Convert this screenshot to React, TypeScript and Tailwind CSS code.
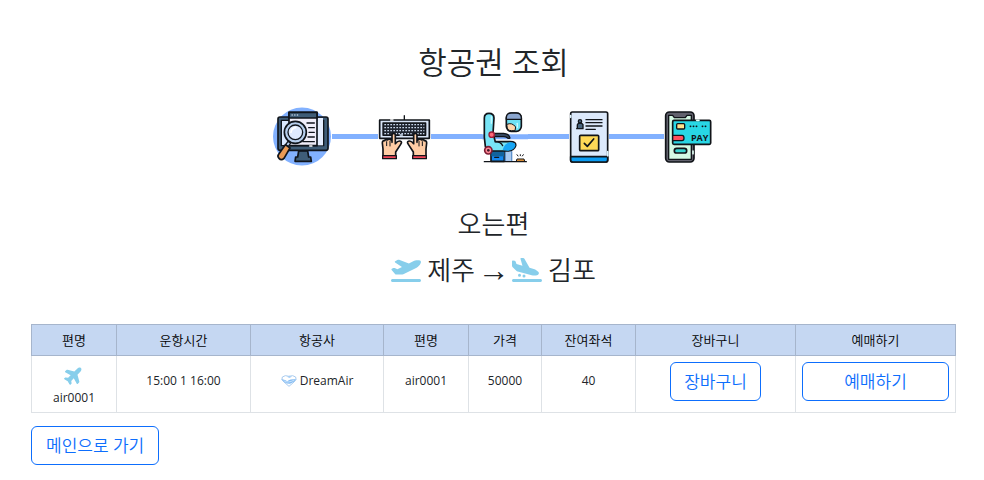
import { FaPlane, FaPlaneArrival, FaPlaneDeparture } from "react-icons/fa6";

function SearchIcon() {
  return (
    <svg className="h-[59px] w-[59px]" viewBox="27 21 177 177" fill="none" stroke="#10151c" strokeWidth="5" strokeLinejoin="round" strokeLinecap="round" aria-hidden="true">
      <circle cx="114" cy="109.500" r="87" fill="#82b1ff" stroke="none" />
      <path d="M104 153h27l3 18h6l2 13H93l2-13h6z" fill="#3f5d78" />
      <rect x="42" y="51" width="150" height="100" rx="6" fill="#3f5d78" />
      <path d="M52 61h127v76H52z" fill="#d9e8ff" strokeWidth="4" />
      <path d="M160 54h17v82h-17z" fill="#e5eeff" stroke="none" />
      <path d="M75 37h84v100H75z" fill="#f0eefa" />
      <path d="M75 37h84v17H75z" fill="#3f5d78" />
      <path d="M84 45h1M92 45h1M100 45h1" stroke="#b8c7dc" strokeWidth="4" />
      <path d="M129 69h22M134 83h17M135 97h16M132 111h19M117 125h34" strokeWidth="4" />
      <path d="m137 138 7 0" stroke="#fff" strokeWidth="4" />
      <circle cx="94" cy="97" r="33" fill="#b7cfee" />
      <circle cx="94" cy="97" r="22" fill="#deeaff" strokeWidth="4" />
      <path d="M81 97q2-13 14-14" stroke="#fff" strokeWidth="5" />
      <path d="m72 124 8 5-7 11-8-6z" fill="#b7cfee" strokeWidth="4" />
      <path d="m64 134 14 10-18 31q-8 8-15 0-6-6-1-12z" fill="#e99a56" />
    </svg>
  );
}

function KeyboardIcon() {
  return (
    <svg className="h-[59px] w-[53px]" viewBox="30 21 159 177" fill="none" stroke="#111419" strokeWidth="5" strokeLinejoin="round" strokeLinecap="round" aria-hidden="true">
      <path d="M109 47v12" strokeWidth="4" />
      <rect x="35" y="60" width="149" height="55" fill="#d8e4f6" />
      <path d="M45 69h128v37H45z" fill="#202630" strokeWidth="4" />
      <path d="M49 74h120M49 83h120M49 92h120M49 101h17M82 101h49M147 101h22" stroke="#c8d6e9" strokeWidth="4" strokeDasharray="5 4" strokeLinecap="butt" />
      <path d="M68 60h7" stroke="#fff" strokeWidth="4" />
      <path d="M72 127v-22q0-5 5-5t5 5v26q9-11 16-7 5 2 0 9l-15 23v12H45v-21l-2-18q0-8 7-7 2-5 8-2 5-6 14 2z" fill="#ffcda5" />
      <path d="M147 127v-22q0-5-5-5t-5 5v26q-9-11-16-7-5 2 0 9l15 23v12h38v-21l2-18q0-8-7-7-2-5-8-2-5-6-14 2z" fill="#ffcda5" />
      <path d="M56 125v12M66 124v14M163 125v12M153 124v14" strokeWidth="3" />
      <path d="M44 167h41v9H44zM134 167h41v9h-41z" fill="#f34558" strokeWidth="4" />
      <path d="M97 105h6" stroke="#dcecff" strokeWidth="5" />
    </svg>
  );
}

function SeatIcon() {
  return (
    <svg className="h-[59px] w-[46px]" viewBox="36 21 138 177" fill="none" stroke="#111419" strokeWidth="5" strokeLinejoin="round" strokeLinecap="round" aria-hidden="true">
      <path d="M36 110h138" stroke="#82b1ff" strokeWidth="15" strokeLinecap="butt" />
      <path d="M63 151h40v33H63z" fill="#1688ef" />
      <path d="M64 153h38v16H64z" fill="#12639d" stroke="none" />
      <path d="M74 172h12" strokeWidth="4" />
      <path d="M106 153h19v30h-19z" fill="#a9c9ef" stroke="none" />
      <path d="M106 155v28M125 155v28" stroke="#5d91cb" strokeWidth="4" />
      <path d="M43 54q0-14 14-14 15 0 15 14l-3 46 7 25h45q18 0 16 12-4 14-23 16H63q-15 0-17-14l-3-27z" fill="#78e4f5" />
      <path d="M98 150q5-19 21-23 18-1 17 10-4 14-22 15z" fill="#18a6f5" stroke="none" />
      <path d="M76 125q17 1 22 12" strokeWidth="4" />
      <path d="M64 50v20" stroke="#c8faff" strokeWidth="4" />
      <path d="M68 100h33q17 2 19 14-4 3-8-1-4-3-12-3H68z" fill="#35475e" strokeWidth="4" />
      <circle cx="65" cy="104" r="8" fill="#ff6878" stroke="#a01c38" strokeWidth="4" />
      <circle cx="55" cy="151" r="11" fill="#ff8995" stroke="#7d1c33" />
      <circle cx="55" cy="151" r="4" fill="#3c1a29" stroke="none" />
      <path d="M43 185h126" strokeWidth="4" />
      <rect x="109" y="39" width="45" height="55" rx="15" fill="#6de1f5" />
      <path d="M109 58v-4q0-15 15-15h15q15 0 15 15v4z" fill="#8ba6cf" strokeWidth="4" />
      <path d="M111 73q15-7 26 8l-2 11h-11q-13 0-13-13z" fill="#ffd6ad" strokeWidth="3" />
      <path d="M142 70v13" stroke="#c8faff" strokeWidth="4" />
      <path d="M142 177h20l2 7h-24z" fill="#ffa43a" strokeWidth="3" />
      <path d="m141 164 3 4M151 164v3M160 164l-3 4" strokeWidth="3" />
    </svg>
  );
}

function TicketIcon() {
  return (
    <svg className="h-[59px] w-[40px]" viewBox="27 21 120 177" fill="none" stroke="#111419" strokeWidth="5" strokeLinejoin="round" strokeLinecap="round" aria-hidden="true">
      <rect x="32" y="36" width="111" height="150" rx="5" fill="#dce9fb" />
      <path d="M32 170h111v10q0 6-6 6H38q-6 0-6-6z" fill="#0b9cf3" />
      <path d="M52 84V74q2-5 8-5t9 5v12H50z" fill="#48657e" strokeWidth="4" />
      <circle cx="60" cy="64" r="5" fill="#48657e" strokeWidth="4" />
      <path d="M78 59h48M78 68h48M78 78h48M78 88h28" strokeWidth="4" />
      <rect x="59" y="106" width="57" height="46" rx="3" fill="#ffd957" />
      <path d="m73 130 9 9 19-22" strokeWidth="5" />
      <path d="M143 155v12M32 47v5" stroke="#dff5ff" strokeWidth="5" />
    </svg>
  );
}

function PayIcon() {
  return (
    <svg className="h-[59px] w-[49px]" viewBox="27 21 147 177" fill="none" stroke="#111419" strokeWidth="5" strokeLinejoin="round" strokeLinecap="round" aria-hidden="true">
      <rect x="32" y="36" width="85" height="150" rx="11" fill="#61616d" />
      <path d="M41 46h12l5 7h33l5-7h13v132H41z" fill="#d5fbe5" strokeWidth="4" />
      <rect x="53" y="61" width="114" height="72" rx="4" fill="#28d7e5" />
      <rect x="65" y="71" width="24" height="16" rx="3" fill="#ffe38c" strokeWidth="4" />
      <path d="M53 106h28q6 0 6 8t-6 8H53z" fill="#ff4e5d" strokeWidth="4" />
      <path d="M106 79h1M115 79h1M124 79h1M142 79h1M151 79h1" strokeWidth="5" />
      <rect x="58" y="145" width="37" height="14" rx="7" fill="#3bd4cf" />
      <path d="M114 153v8M125 61h7" stroke="#e3fff5" strokeWidth="5" />
      <text x="134" y="122" fill="#111419" stroke="none" textAnchor="middle" fontFamily="Open Sans, sans-serif" fontWeight="700" fontSize="27">PAY</text>
    </svg>
  );
}

function DreamAirLogo() {
  return (
    <svg className="h-3 w-4" viewBox="0 0 48 36" fill="none" aria-hidden="true">
      <path d="M24 4Q12-1 4 6q-5 8 5 15l15 13 15-13q10-7 5-15-8-7-20-2Z" stroke="#a9cbee" strokeWidth="3" />
      <path d="M1 12q13 3 18 7 7-7 26-7-4 10-18 14-16 1-26-14Z" fill="#86bdf3" />
      <path d="m18 5 7-3 8 3-8 4z" fill="#a9cff5" />
      <path d="M8 17q12 9 32-2" stroke="#e9f5ff" strokeWidth="2" />
    </svg>
  );
}

function Connector() {
  return <div className="h-[5px] bg-[#82b1ff]" />;
}

const headings = ["편명", "운항시간", "항공사", "편명", "가격", "잔여좌석", "장바구니", "예매하기"];

const outlineButton =
  "h-[39px] rounded-md border border-[#0d6efd] bg-white text-[17px] leading-6 font-[350] text-[#0d6efd] hover:bg-[#0d6efd] hover:text-white";

export default function App() {
  return (
    <main className="bg-white pr-7 pl-[31px] pt-[43px] pb-4 font-['Open_Sans','Noto_Sans_CJK_KR',sans-serif] text-[#212529]">
      <h1 className="text-center text-[31px] leading-[38px] font-[350]">항공권 조회</h1>

      <div className="mt-[26px] grid grid-cols-[59px_46px_53px_51px_46px_41px_40px_55px_50px] items-center justify-center">
        <SearchIcon />
        <Connector />
        <KeyboardIcon />
        <Connector />
        <SeatIcon />
        <Connector />
        <TicketIcon />
        <Connector />
        <PayIcon />
      </div>

      <h2 className="mt-[42px] text-center text-[26px] leading-8 font-[350]">오는편</h2>
      <h2 className="mt-[14px] flex items-center justify-center gap-[6px] text-[26px] leading-8 font-[350]">
        <FaPlaneDeparture className="h-6 w-[30px] text-[#87ceeb]" />
        <span>제주</span>
        <span className="flex w-[25px] justify-center text-[32px] [font-family:'Liberation_Serif',serif]">→</span>
        <FaPlaneArrival className="h-6 w-[30px] text-[#87ceeb]" />
        <span>김포</span>
      </h2>

      <table className="mt-[38px] w-full table-fixed border-collapse text-center text-[12px] leading-[18px]">
        <colgroup>
          <col className="w-[85px]" />
          <col className="w-[134px]" />
          <col className="w-[133px]" />
          <col className="w-[85px]" />
          <col className="w-[73px]" />
          <col className="w-[94px]" />
          <col className="w-[160px]" />
          <col className="w-[160px]" />
        </colgroup>
        <thead>
          <tr className="h-[31px] bg-[#c5d7f2] text-black">
            {headings.map((heading, index) => (
              <th key={index} scope="col" className="border border-[#a6b5cc] p-0 text-[13px] font-[350]">
                {heading}
              </th>
            ))}
          </tr>
        </thead>
        <tbody>
          <tr className="h-[57px]">
            <td className="border border-[#dee2e6]">
              <div className="flex flex-col items-center gap-1 pt-[3px]">
                <FaPlane className="size-5 -rotate-45 text-[#87ceeb]" />
                <span>air0001</span>
              </div>
            </td>
            <td className="border border-[#dee2e6] pb-[6px]">15:00 1 16:00</td>
            <td className="border border-[#dee2e6] pb-[6px]">
              <div className="flex items-center justify-center gap-[3px]">
                <DreamAirLogo />
                DreamAir
              </div>
            </td>
            <td className="border border-[#dee2e6] pb-[6px]">air0001</td>
            <td className="border border-[#dee2e6] pb-[6px]">50000</td>
            <td className="border border-[#dee2e6] pb-[6px]">40</td>
            <td className="border border-[#dee2e6] pb-[5px]">
              <button type="button" className={`${outlineButton} px-[13px]`}>장바구니</button>
            </td>
            <td className="border border-[#dee2e6] px-[6px] pb-[5px]">
              <button type="button" className={`${outlineButton} w-full`}>예매하기</button>
            </td>
          </tr>
        </tbody>
      </table>

      <button type="button" className={`${outlineButton} mt-[13px] px-[14px]`}>메인으로 가기</button>
    </main>
  );
}
